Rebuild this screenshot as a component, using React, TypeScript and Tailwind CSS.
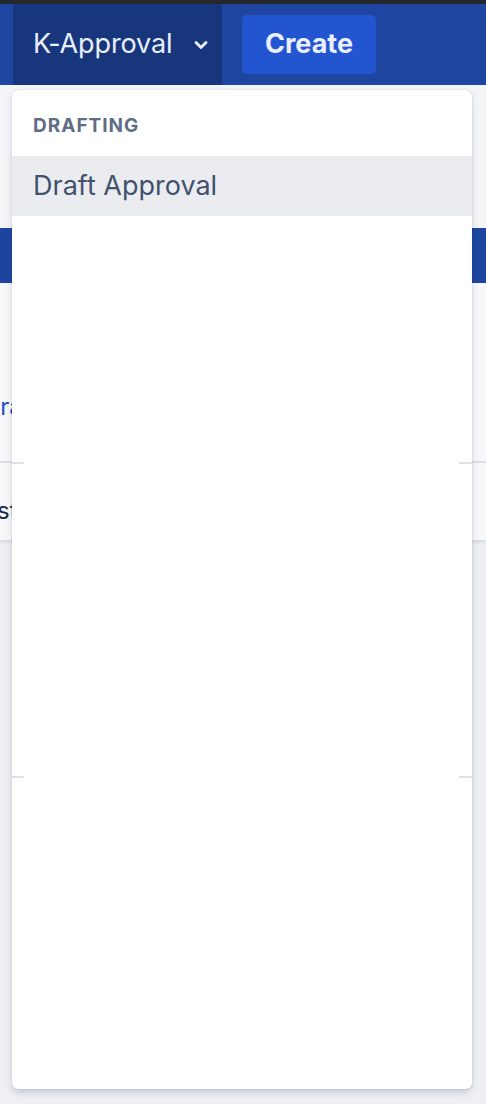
import { ChevronDown } from 'lucide-react'

export default function App() {
  return (
    <div className="relative h-[1104px] w-full overflow-hidden bg-[#eef0f3] font-['Inter',sans-serif]">
      <div className="h-[4px] bg-[#24272b]" />
      <header className="flex h-[81px] items-stretch bg-[#1e46a0] pl-[13px]">
        <button className="flex w-[209px] items-center gap-[18px] bg-[#17367c] pl-[20px] text-[27px] tracking-[-0.1px] text-[#e9effc]">
          K-Approval
          <ChevronDown className="h-[20px] w-[20px]" strokeWidth={3.5} />
        </button>
        <div className="flex items-center pl-[20px]">
          <button className="h-[59px] w-[134px] rounded-[5px] bg-[#2355d1] text-[27px] font-bold text-[#e9effc]">
            Create
          </button>
        </div>
      </header>

      <div className="h-[143px] bg-[#f4f5f7]" />
      <div className="h-[55px] bg-[#1e46a0]" />
      <div className="h-[257px] bg-[#f8f8fa] shadow-[0_2px_4px_rgba(9,30,66,0.12)]">
        <div className="flex h-[180px] items-end border-b-2 border-[#dfe1e6] pb-[36px]">
          <span className="ml-[-17px] text-[24px] text-[#1e4fc2]">Drafts</span>
        </div>
        <div className="pt-[30px]">
          <span className="ml-[-30px] text-[24px] text-[#172b4d]">Last</span>
        </div>
      </div>

      <div className="absolute left-[12px] top-[90px] flex h-[999px] w-[460px] flex-col rounded-[6px] bg-white shadow-[0_4px_8px_-2px_rgba(9,30,66,0.25),0_0_1px_rgba(9,30,66,0.31)]">
        <div className="flex h-[66px] items-center px-[21px] pt-[6px] text-[19px] font-bold tracking-[1px] text-[#5e6c84]">
          DRAFTING
        </div>
        <div className="flex h-[60px] items-center bg-[#ebecf0] px-[21px] text-[27px] text-[#42526e]">
          Draft Approval
        </div>
        <div className="flex h-[248px] items-end">
          <div className="flex w-full justify-between">
            <span className="h-[2px] w-[12px] bg-[#dfe1e6]" />
            <span className="h-[2px] w-[13px] bg-[#dfe1e6]" />
          </div>
        </div>
        <div className="flex h-[314px] items-end">
          <div className="flex w-full justify-between">
            <span className="h-[2px] w-[12px] bg-[#dfe1e6]" />
            <span className="h-[2px] w-[13px] bg-[#dfe1e6]" />
          </div>
        </div>
      </div>
    </div>
  )
}
